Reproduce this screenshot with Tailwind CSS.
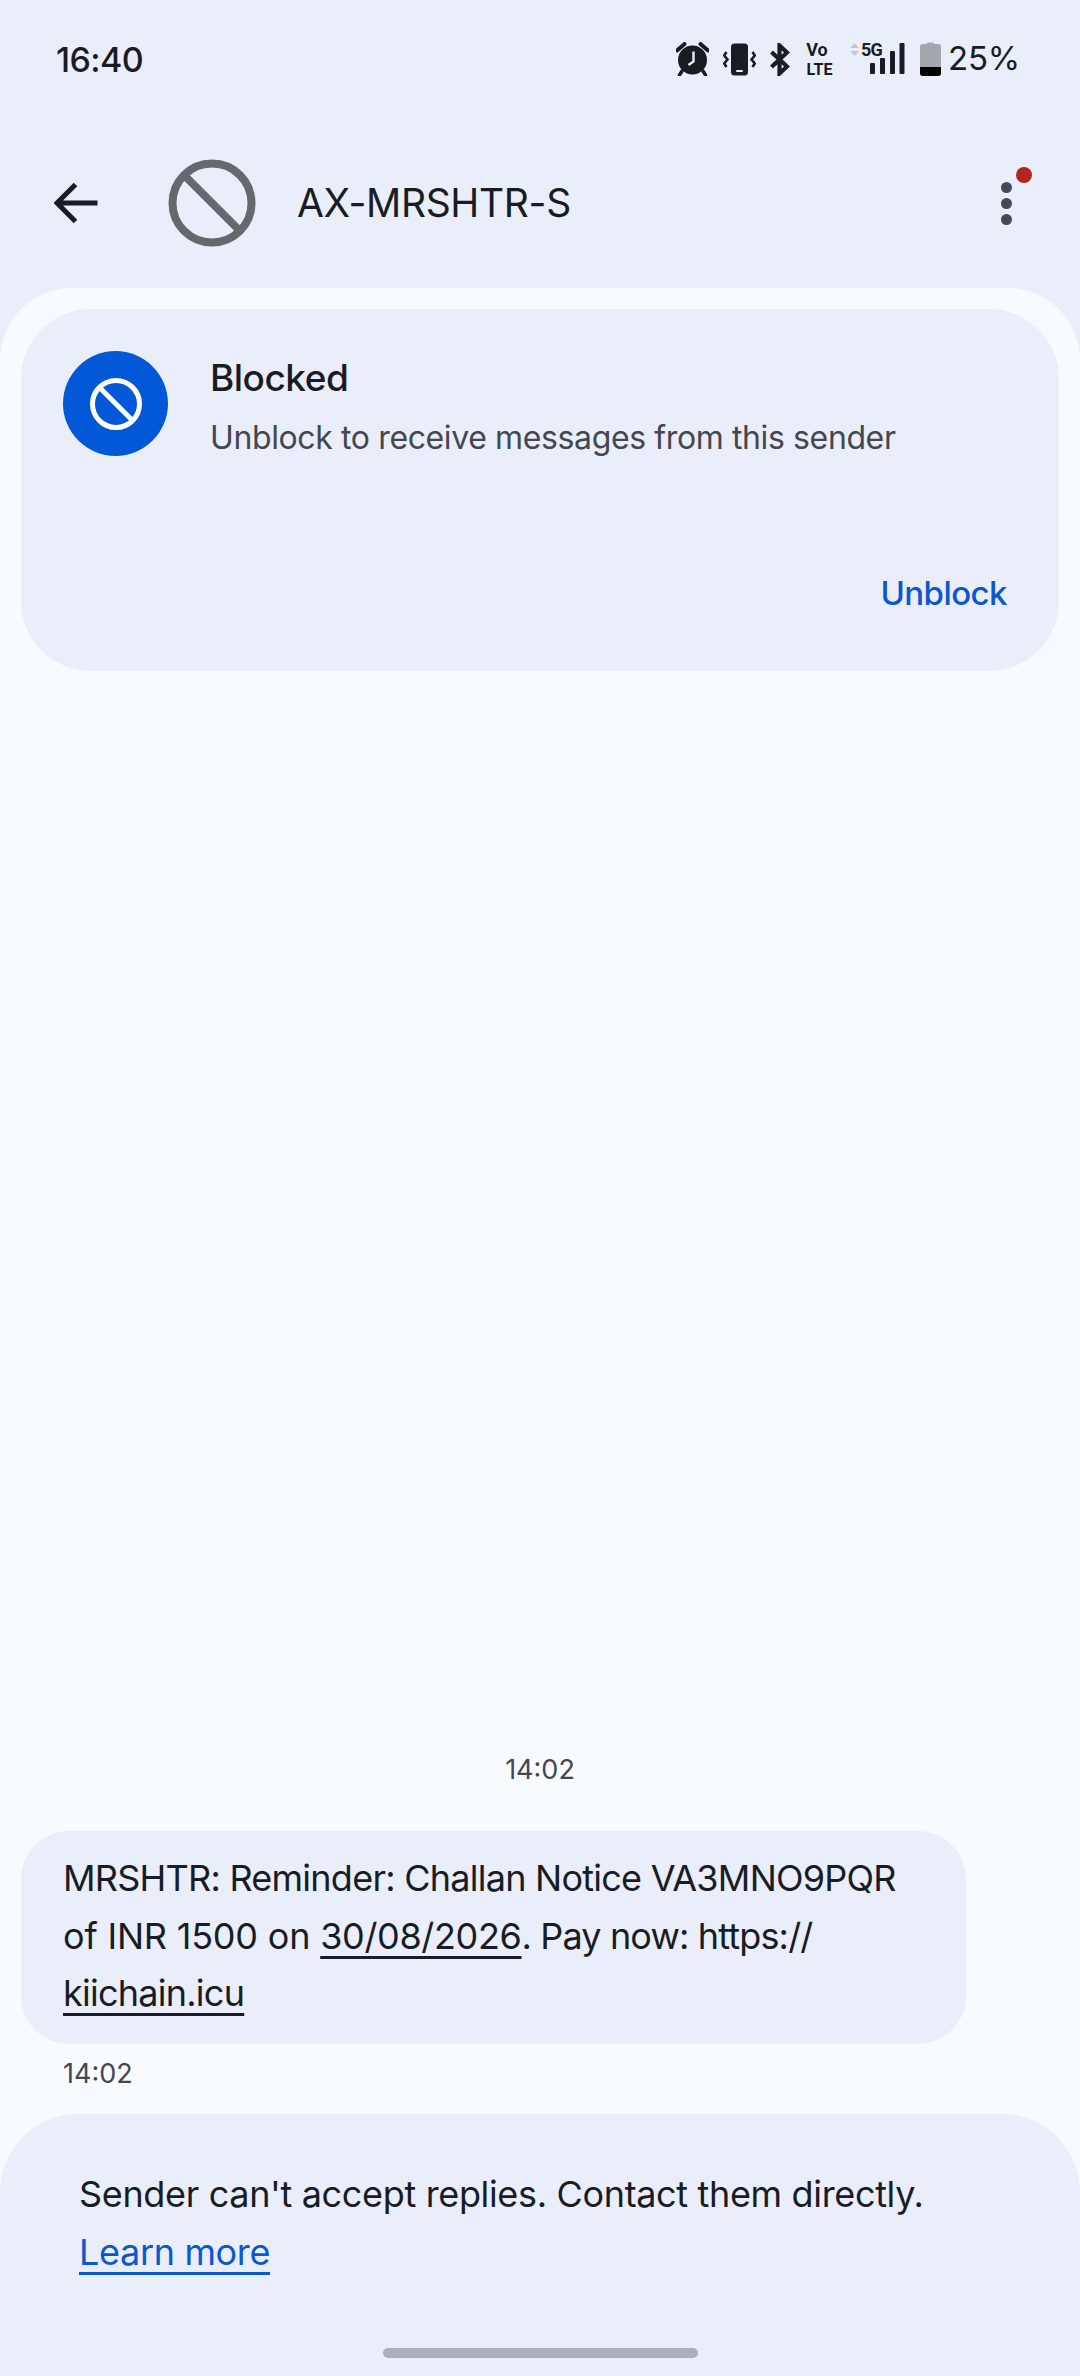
<!DOCTYPE html>
<html lang="en">
<head>
<meta charset="UTF-8">
<meta name="viewport" content="width=device-width, initial-scale=1.0">
<title>AX-MRSHTR-S</title>
<script src="https://cdn.jsdelivr.net/npm/@tailwindcss/browser@4"></script>
</head>
<body class="bg-[#e9eefa]">
<div class="w-[1080px] h-[2376px] flex flex-col overflow-hidden bg-[#e9eefa] text-[#1a1c24] font-['Inter',sans-serif]">

  <!-- Status bar -->
  <div class="h-[118px] shrink-0 flex items-center pl-[56px] pr-[60px]">
    <span class="text-[34px] font-medium tracking-[-0.6px]">16:40</span>
    <div class="ml-auto flex items-center">
      <!-- alarm -->
      <svg class="w-[33px] h-[34px]" viewBox="0 0 33 34">
        <circle cx="16.5" cy="18" r="14.5" fill="#1a1c24"/>
        <path d="M1 8.5 L8.5 2 M24.5 2 L32 8.5" stroke="#1a1c24" stroke-width="4" stroke-linecap="round"/>
        <path d="M6 29 L3.5 33 M27 29 L29.5 33" stroke="#1a1c24" stroke-width="3.4" stroke-linecap="round"/>
        <path d="M17.5 9.5 V19.5 L12.5 23" stroke="#e9eefa" stroke-width="2.4" fill="none"/>
      </svg>
      <!-- vibrate -->
      <svg class="w-[33px] h-[33px] ml-[14px]" viewBox="0 0 33 33">
        <rect x="8" y="0.5" width="17" height="32" rx="3.5" fill="#1a1c24"/>
        <rect x="13" y="27" width="7" height="2" rx="1" fill="#e9eefa"/>
        <path d="M3.5 9 L1.2 12.5 L4.5 16.5 L1.2 20.5 L3.5 24" stroke="#1a1c24" stroke-width="2.6" fill="none"/>
        <path d="M29.5 9 L31.8 12.5 L28.5 16.5 L31.8 20.5 L29.5 24" stroke="#1a1c24" stroke-width="2.6" fill="none"/>
      </svg>
      <!-- bluetooth -->
      <svg class="w-[20px] h-[33px] ml-[14px]" viewBox="0 0 20 33">
        <path d="M1.5 9 L17 23.5 L9.5 30.5 V2.5 L17 9.5 L1.5 24" stroke="#1a1c24" stroke-width="4.2" fill="none"/>
      </svg>
      <!-- volte -->
      <div class="w-[29px] ml-[15px] flex flex-col items-center font-['Roboto',sans-serif] font-bold text-[#1a1c24]">
        <span class="text-[18px] leading-[17px] -ml-[5px]">Vo</span>
        <span class="text-[16px] leading-[15px] mt-[4px]">LTE</span>
      </div>
      <!-- arrows, 5G and signal -->
      <div class="relative w-[55px] h-[33px] ml-[16px]">
        <svg class="absolute left-0 top-0 w-[9px] h-[13px]" viewBox="0 0 9 13">
          <path d="M4.5 0 L9 5 H0 Z M0 8 H9 L4.5 13 Z" fill="#c4c7d1"/>
        </svg>
        <span class="absolute left-[11px] top-[-2px] font-['Roboto',sans-serif] font-bold text-[18px] leading-[17px] tracking-[-0.9px]">5G</span>
        <svg class="absolute left-[20px] top-0 w-[35px] h-[32px]" viewBox="0 0 35 32">
          <rect x="0" y="20" width="5" height="11" rx="1" fill="#1a1c24"/>
          <rect x="10" y="15" width="5" height="16" rx="1" fill="#1a1c24"/>
          <rect x="20" y="8" width="5" height="23" rx="1" fill="#1a1c24"/>
          <rect x="29.5" y="0" width="5" height="31" rx="1" fill="#1a1c24"/>
        </svg>
      </div>
      <!-- battery -->
      <svg class="w-[21px] h-[34px] ml-[15px]" viewBox="0 0 21 34">
        <path d="M7 1.5 Q7 0.5 8 0.5 H13 Q14 0.5 14 1.5 V2 H18 Q21 2 21 5 V31 Q21 34 18 34 H3 Q0 34 0 31 V5 Q0 2 3 2 H7 Z" fill="#a5a7af"/>
        <path d="M0 25 H21 V31 Q21 34 18 34 H3 Q0 34 0 31 Z" fill="#000"/>
      </svg>
      <span class="text-[33px] ml-[7px] tracking-[-0.2px]">25%</span>
    </div>
  </div>

  <!-- App bar -->
  <div class="h-[170px] shrink-0 flex items-center relative">
    <svg class="w-[44px] h-[42px] ml-[54px]" viewBox="0 0 44 42">
      <path d="M43.5 21 H3 M21.5 2.5 L3 21 L21.5 39.5" stroke="#1a1c24" stroke-width="5" fill="none"/>
    </svg>
    <svg class="w-[88px] h-[88px] ml-[70px]" viewBox="0 0 88 88">
      <circle cx="44" cy="44" r="39.5" stroke="#65686d" stroke-width="8" fill="none"/>
      <path d="M16 16 L72 72" stroke="#65686d" stroke-width="8"/>
    </svg>
    <span class="ml-[41px] text-[39px] tracking-[-0.35px]">AX-MRSHTR-S</span>
    <div class="ml-auto mr-[68px] flex flex-col gap-[5px]">
      <span class="w-[11px] h-[11px] rounded-full bg-[#444859]"></span>
      <span class="w-[11px] h-[11px] rounded-full bg-[#444859]"></span>
      <span class="w-[11px] h-[11px] rounded-full bg-[#444859]"></span>
    </div>
    <span class="absolute left-[1016px] top-[49px] w-[16px] h-[16px] rounded-full bg-[#b3261e]"></span>
  </div>

  <!-- Conversation sheet -->
  <div class="flex-1 flex flex-col bg-[#f7faff] rounded-t-[72px] pt-[21px]">
    <div class="mx-[21px] h-[362px] shrink-0 rounded-[70px] bg-[#e9eefa] flex flex-col">
      <div class="flex pl-[42px] pt-[42px]">
        <div class="w-[105px] h-[105px] rounded-full bg-[#0258d6] flex items-center justify-center">
          <svg class="w-[52px] h-[52px]" viewBox="0 0 52 52">
            <circle cx="26" cy="26" r="23.5" stroke="#fff" stroke-width="5" fill="none"/>
            <path d="M9.5 9.5 L42.5 42.5" stroke="#fff" stroke-width="5"/>
          </svg>
        </div>
        <div class="ml-[42px] pt-[4px]">
          <div class="text-[37px] leading-[46px] font-medium tracking-[-0.5px]">Blocked</div>
          <div class="text-[32px] leading-[44px] mt-[15px] text-[#44474f] tracking-[-0.38px]">Unblock to receive messages from this sender</div>
        </div>
      </div>
      <div class="mt-auto mb-[56px] pr-[52px] text-right text-[33px] leading-[44px] font-medium text-[#0b57d0] tracking-[-0.55px]">Unblock</div>
    </div>

    <div class="flex-1"></div>

    <div class="h-[40px] mb-[41px] shrink-0 flex items-center justify-center text-[27px] text-[#44474f]">14:02</div>

    <div class="ml-[21px] w-[945px] h-[213px] shrink-0 rounded-[48px] bg-[#e9eefa] pl-[42px] pt-[19px] text-[36px] leading-[57.6px] tracking-[-0.75px]">
      <div>MRSHTR: Reminder: Challan Notice VA3MNO9PQR</div>
      <div><span class="tracking-[-0.2px]">of INR 1500 on </span><span class="underline underline-offset-[7px] decoration-[3px] tracking-[-0.35px]">30/08/2026</span><span class="tracking-[-0.85px]">. Pay now: https://</span></div>
      <div><span class="underline underline-offset-[7px] decoration-[3px]">kiichain.icu</span></div>
    </div>

    <div class="h-[40px] mt-[10px] mb-[20px] shrink-0 flex items-center pl-[63px] text-[27px] text-[#44474f]">14:02</div>

    <div class="h-[262px] shrink-0 rounded-t-[78px] bg-[#e9eefa] flex flex-col pl-[79px] pt-[52px] text-[36px] leading-[57.6px] tracking-[-0.34px]">
      <div>Sender can't accept replies. Contact them directly.</div>
      <div><span class="text-[#0b57d0] underline underline-offset-[7px] decoration-[3px]">Learn more</span></div>
      <div class="mt-auto mb-[18px] -ml-[79px] flex justify-center">
        <span class="w-[315px] h-[10px] rounded-full bg-[#abaebb]"></span>
      </div>
    </div>
  </div>
</div>
</body>
</html>
